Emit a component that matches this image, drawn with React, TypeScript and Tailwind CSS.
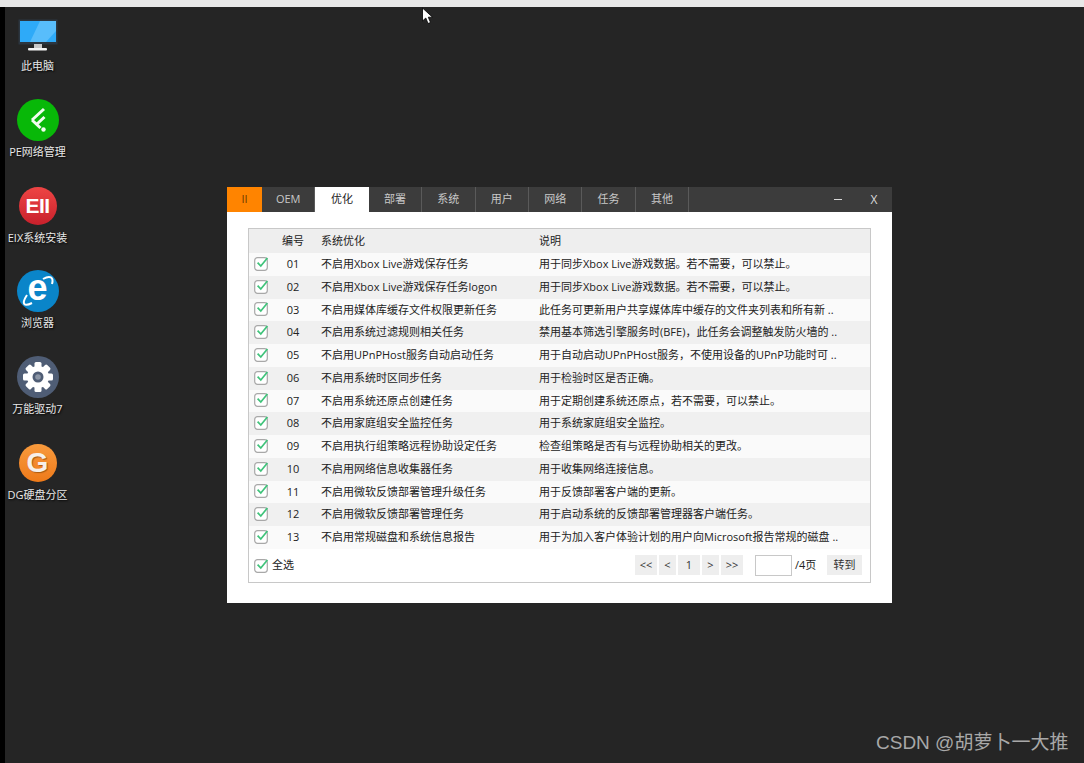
import React from 'react';

const font = { fontFamily: '"Open Sans", "Noto Sans CJK SC", sans-serif' };

const tabs = ['OEM', '优化', '部署', '系统', '用户', '网络', '任务', '其他'];

const rows = [
  ['01', '不启用Xbox Live游戏保存任务', '用于同步Xbox Live游戏数据。若不需要，可以禁止。'],
  ['02', '不启用Xbox Live游戏保存任务logon', '用于同步Xbox Live游戏数据。若不需要，可以禁止。'],
  ['03', '不启用媒体库缓存文件权限更新任务', '此任务可更新用户共享媒体库中缓存的文件夹列表和所有新 ..'],
  ['04', '不启用系统过滤规则相关任务', '禁用基本筛选引擎服务时(BFE)，此任务会调整触发防火墙的 ..'],
  ['05', '不启用UPnPHost服务自动启动任务', '用于自动启动UPnPHost服务，不使用设备的UPnP功能时可 ..'],
  ['06', '不启用系统时区同步任务', '用于检验时区是否正确。'],
  ['07', '不启用系统还原点创建任务', '用于定期创建系统还原点，若不需要，可以禁止。'],
  ['08', '不启用家庭组安全监控任务', '用于系统家庭组安全监控。'],
  ['09', '不启用执行组策略远程协助设定任务', '检查组策略是否有与远程协助相关的更改。'],
  ['10', '不启用网络信息收集器任务', '用于收集网络连接信息。'],
  ['11', '不启用微软反馈部署管理升级任务', '用于反馈部署客户端的更新。'],
  ['12', '不启用微软反馈部署管理任务', '用于启动系统的反馈部署管理器客户端任务。'],
  ['13', '不启用常规磁盘和系统信息报告', '用于为加入客户体验计划的用户向Microsoft报告常规的磁盘 ..'],
];

const CheckBox = () => (
  <svg width="16" height="15" viewBox="0 0 16 15" fill="none">
    <rect x="0.7" y="1.7" width="12.6" height="12.6" rx="2.8" stroke="#a8a8a8" strokeWidth="1.2" fill="#fff" />
    <path d="M3.6 6.6 L6.8 10 L13.4 2" stroke="#3fc37a" strokeWidth="1.7" />
  </svg>
);

const PageBtn = ({ label, w }: { label: string; w: string }) => (
  <div className={`${w} h-5 bg-[#eeeeee] flex items-center justify-center text-[11px] text-[#333]`}>{label}</div>
);

const DesktopIcon = ({ label, children }: { label: string; children: React.ReactNode }) => (
  <div className="h-[85.8px] w-[75px] flex flex-col items-center">
    <div className="h-[44px] flex items-center justify-center">{children}</div>
    <span className="mt-[2px] text-[11px] leading-[16px] text-[#e8e8e8] whitespace-nowrap [text-shadow:1px_1px_2px_#000]">{label}</span>
  </div>
);

const MonitorIcon = () => (
  <svg className="mt-[3px]" width="40" height="34" viewBox="0 0 40 34">
    <rect x="0.5" y="0.5" width="39" height="25" fill="#2c3640" />
    <rect x="2" y="2" width="36" height="21" fill="#2eaaf8" />
    <path d="M22 2 H38 V12 L28 23 H12 Z" fill="#58bdfb" />
    <rect x="16" y="25" width="8" height="4" fill="#c8c8c8" />
    <rect x="10" y="29" width="19" height="2.5" rx="1" fill="#f4f4f4" />
  </svg>
);

const PeIcon = () => (
  <svg width="42" height="42" viewBox="0 0 42 42" fill="none">
    <circle cx="21" cy="21" r="21" fill="#08b808" />
    <path d="M15 21 L27 10 M20.5 24.5 L27.5 18 M15 21 L23.5 29" stroke="#f2fdf0" strokeWidth="3" />
    <circle cx="26.5" cy="30.5" r="2.2" fill="#f2fdf0" />
  </svg>
);

const EixIcon = () => (
  <div className="w-[38px] h-[38px] rounded-full bg-gradient-to-b from-[#ee4444] to-[#c8202c] flex items-center justify-center">
    <span className="text-white text-[21px] font-bold leading-none tracking-[-0.5px] [font-family:'Liberation_Sans',sans-serif]">EII</span>
  </div>
);

const IeIcon = () => (
  <div className="relative w-[42px] h-[42px] rounded-full bg-[#0a85c9] flex items-center justify-center">
    <span className="text-white text-[36px] font-bold leading-none -mt-[7px] [font-family:'Liberation_Sans',sans-serif]">e</span>
    <svg className="absolute inset-0" width="42" height="42" viewBox="0 0 42 42" fill="none">
      <path d="M10 25 C4 34 7 37 15 33 M26 9 C33 5 37 7 35 14" stroke="#fff" strokeWidth="2" />
    </svg>
  </div>
);

const GearIcon = () => (
  <div className="w-[42px] h-[42px] rounded-full bg-[#4f5d75] flex items-center justify-center">
    <svg width="32" height="32" viewBox="0 0 32 32">
      <g fill="#fff">
        {[0, 45, 90, 135, 180, 225, 270, 315].map((a) => (
          <rect key={a} x="12.5" y="1" width="7" height="8" rx="1.5" transform={`rotate(${a} 16 16)`} />
        ))}
      </g>
      <circle cx="16" cy="16" r="11" fill="#fff" />
      <circle cx="16" cy="16" r="5.5" fill="#4f5d75" />
      <circle cx="16" cy="16" r="2.8" fill="#8c96a6" />
    </svg>
  </div>
);

const DgIcon = () => (
  <div className="w-[38px] h-[38px] rounded-full bg-gradient-to-b from-[#f89a3c] to-[#ee7a18] flex items-center justify-center">
    <span className="text-[#f6f0ea] text-[28px] font-bold leading-none [font-family:'Liberation_Sans',sans-serif] [text-shadow:1px_1px_1px_#a85a10]">G</span>
  </div>
);

export default function App() {
  return (
    <div className="w-[1084px] h-[763px] flex flex-col overflow-hidden bg-[#252525]" style={font}>
      <div className="h-[7px] bg-[#e8e8e8] shrink-0" />
      <div className="flex-1 flex min-h-0">
        <div className="w-[5px] bg-black shrink-0" />
        <div className="relative flex-1">
          {/* desktop icons */}
          <div className="flex flex-col pt-[5px] -ml-[5px] w-[75px]">
            <DesktopIcon label="此电脑"><MonitorIcon /></DesktopIcon>
            <DesktopIcon label="PE网络管理"><PeIcon /></DesktopIcon>
            <DesktopIcon label="EIX系统安装"><EixIcon /></DesktopIcon>
            <DesktopIcon label="浏览器"><IeIcon /></DesktopIcon>
            <DesktopIcon label="万能驱动7"><GearIcon /></DesktopIcon>
            <DesktopIcon label="DG硬盘分区"><DgIcon /></DesktopIcon>
          </div>

          {/* cursor */}
          <svg className="absolute left-[416px] top-[0px]" width="14" height="18" viewBox="0 0 14 18">
            <path d="M1.5 1 V14 L4.8 11 L7 16.5 L9.5 15.5 L7.3 10.2 H11.5 Z" fill="#fff" stroke="#000" strokeWidth="0.8" />
          </svg>

          {/* window */}
          <div className="absolute left-[222px] top-[180px] w-[665px] h-[416px] bg-white flex flex-col">
            <div className="h-[25px] bg-[#3c3c3c] flex shrink-0">
              <div className="w-[35px] bg-[#ff8400] flex items-center justify-center text-[11px] text-[#6a3a00]">II</div>
              {tabs.map((t) => (
                <div
                  key={t}
                  className={
                    t === '优化'
                      ? 'w-[53.4px] bg-white flex items-center justify-center text-[11px] text-[#222]'
                      : 'w-[53.4px] border-r border-[#5a5a5a] flex items-center justify-center text-[11px] text-[#c8c8c8]'
                  }
                >
                  {t}
                </div>
              ))}
              <div className="ml-auto flex items-center text-[#d8d8d8] text-[12px]">
                <div className="w-[36px] flex justify-center">
                  <div className="w-[8px] h-px bg-[#d8d8d8]" />
                </div>
                <span className="w-[36px] text-center">X</span>
              </div>
            </div>

            <div className="flex-1 pt-[16px] px-[21px] pb-[20px]">
              <div className="h-full border border-[#c8c8c8] flex flex-col text-[11px] text-[#222]">
                <div className="h-[24px] bg-[#eeeeee] flex items-center shrink-0">
                  <div className="w-[29px]" />
                  <div className="w-[30px] text-center">编号</div>
                  <div className="ml-[13px] w-[218px]">系统优化</div>
                  <div>说明</div>
                </div>
                {rows.map(([no, name, desc], i) => (
                  <div key={no} className={`h-[22.75px] flex items-center shrink-0 ${i % 2 === 0 ? 'bg-[#fafafa]' : 'bg-[#f0f0f0]'}`}>
                    <div className="w-[29px] pl-[5px] -mt-[2px]"><CheckBox /></div>
                    <div className="w-[30px] text-center">{no}</div>
                    <div className="ml-[13px] w-[218px] whitespace-nowrap">{name}</div>
                    <div className="whitespace-nowrap">{desc}</div>
                  </div>
                ))}
                <div className="flex-1 flex items-center pl-[5px] pr-[8px]">
                  <CheckBox />
                  <span className="ml-[2px]">全选</span>
                  <div className="ml-auto flex items-center">
                    <div className="flex gap-[2px]">
                      <PageBtn label="<<" w="w-[22px]" />
                      <PageBtn label="<" w="w-[17px]" />
                      <PageBtn label="1" w="w-[22px]" />
                      <PageBtn label=">" w="w-[17px]" />
                      <PageBtn label=">>" w="w-[22px]" />
                    </div>
                    <div className="ml-[12px] w-[37px] h-[21px] border border-[#c8c8c8] bg-white" />
                    <span className="ml-[3px] w-[32px]">/4页</span>
                    <PageBtn label="转到" w="w-[35px]" />
                  </div>
                </div>
              </div>
            </div>
          </div>

          {/* watermark */}
          <span className="absolute left-[871px] top-[722px] text-[19px] leading-[28px] text-[#a8a8a8] whitespace-nowrap [font-family:'Liberation_Sans','Noto_Sans_CJK_SC',sans-serif]">
            CSDN @胡萝卜一大推
          </span>
        </div>
      </div>
    </div>
  );
}
